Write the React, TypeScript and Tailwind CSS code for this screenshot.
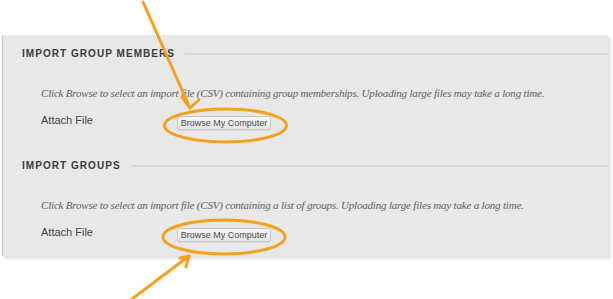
const Section = ({ title, text }: { title: string; text: string }) => {
  return (
    <div>
      <div className="flex items-center pl-[19px]">
        <h2 className="text-[10px] leading-[12px] font-bold tracking-[1.05px] text-[#3b3b3b] whitespace-nowrap">
          {title}
        </h2>
        <div className="flex-1 h-[2px] bg-[#d9d9d9] ml-[10px]" />
      </div>
      <p
        className="mt-[26px] pl-[38px] text-[11px] leading-[14px] italic tracking-[-0.19px] text-[#606060] whitespace-nowrap"
        style={{ fontFamily: '"Liberation Serif", serif' }}
      >
        {text}
      </p>
      <div className="mt-[13px] pl-[38px] flex items-start">
        <span className="w-[136px] text-[11px] leading-[14px] text-[#444]">Attach File</span>
        <button className="mt-[3px] w-[94px] h-[14px] flex items-center justify-center rounded-[2px] border border-[#c6c6c6] bg-gradient-to-b from-[#f8f8f8] to-[#e4e4e4] text-[9px] leading-none text-[#4a4a4a] shadow-[0_1px_0_rgba(0,0,0,0.06)]">
          Browse My Computer
        </button>
      </div>
    </div>
  );
};

export default function App() {
  return (
    <div
      className="relative w-[613px] h-[299px] bg-white overflow-hidden"
      style={{ fontFamily: '"Liberation Sans", Arial, sans-serif' }}
    >
      <div className="mt-[35px] ml-[2px] w-[606px] h-[221px] bg-[#e8e8e8] border-l border-[#c9c9c9] shadow-[3px_3px_3px_rgba(0,0,0,0.12)] pt-[13px] flex flex-col gap-[30px]">
        <Section
          title="IMPORT GROUP MEMBERS"
          text="Click Browse to select an import file (CSV) containing group memberships. Uploading large files may take a long time."
        />
        <Section
          title="IMPORT GROUPS"
          text="Click Browse to select an import file (CSV) containing a list of groups. Uploading large files may take a long time."
        />
      </div>

      {/* annotation overlay */}
      <svg
        className="absolute inset-0 pointer-events-none"
        width="613"
        height="299"
        viewBox="0 0 613 299"
        fill="none"
        stroke="#f7a01c"
        strokeWidth="3"
        strokeLinecap="round"
        strokeLinejoin="round"
      >
        <ellipse cx="225.5" cy="125.5" rx="61" ry="16.5" />
        <ellipse cx="224" cy="237" rx="61" ry="17" />
        <path d="M143 2 L190 108" />
        <path d="M182 97 L190 108 L199 100" />
        <path d="M189 256 L128 302" />
        <path d="M180 258 L189 256 L186 267" />
      </svg>
    </div>
  );
}
